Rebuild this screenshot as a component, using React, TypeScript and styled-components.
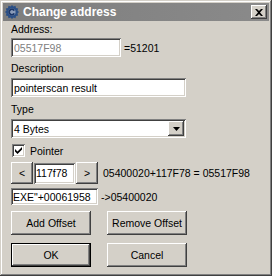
import React from "react";
import styled, { createGlobalStyle } from "styled-components";

const Global = createGlobalStyle`
  html, body { margin: 0; padding: 0; background: #d4d0c8; }
  body { font-family: "Liberation Sans", Arial, sans-serif; font-size: 10.5px; color: #000; }
`;

const raised = `
  box-shadow: inset -1px -1px #404040, inset 1px 1px #ffffff, inset -2px -2px #808080, inset 2px 2px #d4d0c8;
`;
const sunken = `
  box-shadow: inset 1px 1px #808080, inset -1px -1px #ffffff, inset 2px 2px #404040, inset -2px -2px #d4d0c8;
`;

const Window = styled.div`
  width: 272px;
  height: 276px;
  box-sizing: border-box;
  padding: 3px;
  background: #d4d0c8;
  box-shadow: inset -1px -1px #404040, inset 1px 1px #d4d0c8, inset -2px -2px #808080, inset 2px 2px #ffffff;
  display: flex;
  flex-direction: column;
`;

const TitleBar = styled.div`
  height: 18px;
  background: linear-gradient(to right, #7e7e7e, #8a8a8a);
  display: flex;
  align-items: center;
  padding: 0 2px 0 1px;
`;

const TitleText = styled.span`
  color: #ffffff;
  font-weight: bold;
  font-size: 12px;
  margin-left: 3px;
  flex: 1;
`;

const CloseBtn = styled.div`
  width: 16px;
  height: 14px;
  background: #d4d0c8;
  ${raised}
  display: flex;
  align-items: center;
  justify-content: center;
`;

const Content = styled.div`
  padding-left: 8px;
  display: flex;
  flex-direction: column;
`;

const Label = styled.div<{ $mt: number }>`
  height: 13px;
  line-height: 13px;
  margin-top: ${(p) => p.$mt}px;
`;

const Row = styled.div<{ $mt: number; $h: number; $gap?: number }>`
  display: flex;
  align-items: center;
  margin-top: ${(p) => p.$mt}px;
  height: ${(p) => p.$h}px;
  gap: ${(p) => p.$gap ?? 0}px;
`;

const Edit = styled.div<{ $w: number; $h?: number; $gray?: boolean; $pad?: number }>`
  width: ${(p) => p.$w}px;
  height: ${(p) => p.$h ?? 19}px;
  box-sizing: border-box;
  background: #ffffff;
  ${sunken}
  padding: 0 ${(p) => p.$pad ?? 3}px;
  display: flex;
  align-items: center;
  color: ${(p) => (p.$gray ? "#808080" : "#000")};
  white-space: nowrap;
  overflow: hidden;
`;

const SideText = styled.span<{ $ml: number }>`
  margin-left: ${(p) => p.$ml}px;
  white-space: nowrap;
`;

const Combo = styled.div`
  width: 175px;
  height: 19px;
  box-sizing: border-box;
  background: #ffffff;
  ${sunken}
  padding: 2px 2px 2px 3px;
  display: flex;
  align-items: center;
  margin-top: 3px;
`;

const ComboText = styled.span`
  flex: 1;
`;

const ComboArrow = styled.div`
  width: 16px;
  height: 15px;
  background: #d4d0c8;
  ${raised}
  display: flex;
  align-items: center;
  justify-content: center;
`;

const CheckBox = styled.div`
  width: 13px;
  height: 13px;
  box-sizing: border-box;
  background: #ffffff;
  ${sunken}
  margin-left: 1px;
  display: flex;
  align-items: center;
  justify-content: center;
`;

const Button = styled.div<{ $w: number; $h?: number }>`
  width: ${(p) => p.$w}px;
  height: ${(p) => p.$h ?? 24}px;
  box-sizing: border-box;
  background: #d4d0c8;
  ${raised}
  display: flex;
  align-items: center;
  justify-content: center;
`;

const DefaultButton = styled.div<{ $w: number }>`
  width: ${(p) => p.$w}px;
  height: 24px;
  box-sizing: border-box;
  border: 1px solid #000;
  background: #d4d0c8;
  ${raised}
  display: flex;
  align-items: center;
  justify-content: center;
`;

const AppIcon = () => (
  <svg width="16" height="16" viewBox="0 0 16 16">
    <path
      d="M8 1 L9.5 2.5 L11.5 1.8 L12 4 L14.2 4.5 L13.5 6.5 L15 8 L13.5 9.5 L14.2 11.5 L12 12 L11.5 14.2 L9.5 13.5 L8 15 L6.5 13.5 L4.5 14.2 L4 12 L1.8 11.5 L2.5 9.5 L1 8 L2.5 6.5 L1.8 4.5 L4 4 L4.5 1.8 L6.5 2.5 Z"
      fill="#2a4f86"
    />
    <circle cx="8" cy="8" r="3.6" fill="#8a9bb8" />
    <path d="M11 6.2 A3.6 3.6 0 1 0 11 9.8 L9.3 9 A1.8 1.8 0 1 1 9.3 7 Z" fill="#1b3566" />
  </svg>
);

export default function App() {
  return (
    <>
      <Global />
      <Window>
        <TitleBar>
          <AppIcon />
          <TitleText>Change address</TitleText>
          <CloseBtn>
            <svg width="8" height="7" viewBox="0 0 8 7">
              <path d="M0 0 L2 0 L4 2 L6 0 L8 0 L5 3.5 L8 7 L6 7 L4 5 L2 7 L0 7 L3 3.5 Z" fill="#000" />
            </svg>
          </CloseBtn>
        </TitleBar>
        <Content>
          <Label $mt={2}>Address:</Label>
          <Row $mt={2} $h={19}>
            <Edit $w={110} $gray>05517F98</Edit>
            <SideText $ml={3}>=51201</SideText>
          </Row>
          <Label $mt={5}>Description</Label>
          <Row $mt={3} $h={19}>
            <Edit $w={175}>pointerscan result</Edit>
          </Row>
          <Label $mt={6}>Type</Label>
          <Combo>
            <ComboText>4 Bytes</ComboText>
            <ComboArrow>
              <svg width="7" height="4" viewBox="0 0 7 4">
                <path d="M0 0 H7 L3.5 4 Z" fill="#000" />
              </svg>
            </ComboArrow>
          </Combo>
          <Row $mt={6} $h={13}>
            <CheckBox>
              <svg width="7" height="7" viewBox="0 0 7 7">
                <path d="M0 2 L0 4.5 L2.5 7 L7 2.5 L7 0 L2.5 4.5 Z" fill="#000" />
              </svg>
            </CheckBox>
            <SideText $ml={5}>Pointer</SideText>
          </Row>
          <Row $mt={5} $h={22} $gap={1}>
            <Button $w={22} $h={22}>&lt;</Button>
            <Edit $w={41} $h={21} $pad={2}>117f78</Edit>
            <Button $w={22} $h={22}>&gt;</Button>
            <SideText $ml={4}>05400020+117F78 = 05517F98</SideText>
          </Row>
          <Row $mt={4} $h={17}>
            <Edit $w={87} $h={17} $pad={2}>EXE"+00061958</Edit>
            <SideText $ml={3}>-&gt;05400020</SideText>
          </Row>
          <Row $mt={6} $h={24} $gap={16}>
            <Button $w={80}>Add Offset</Button>
            <Button $w={80}>Remove Offset</Button>
          </Row>
          <Row $mt={8} $h={24} $gap={16}>
            <DefaultButton $w={80}>OK</DefaultButton>
            <Button $w={80}>Cancel</Button>
          </Row>
        </Content>
      </Window>
    </>
  );
}
